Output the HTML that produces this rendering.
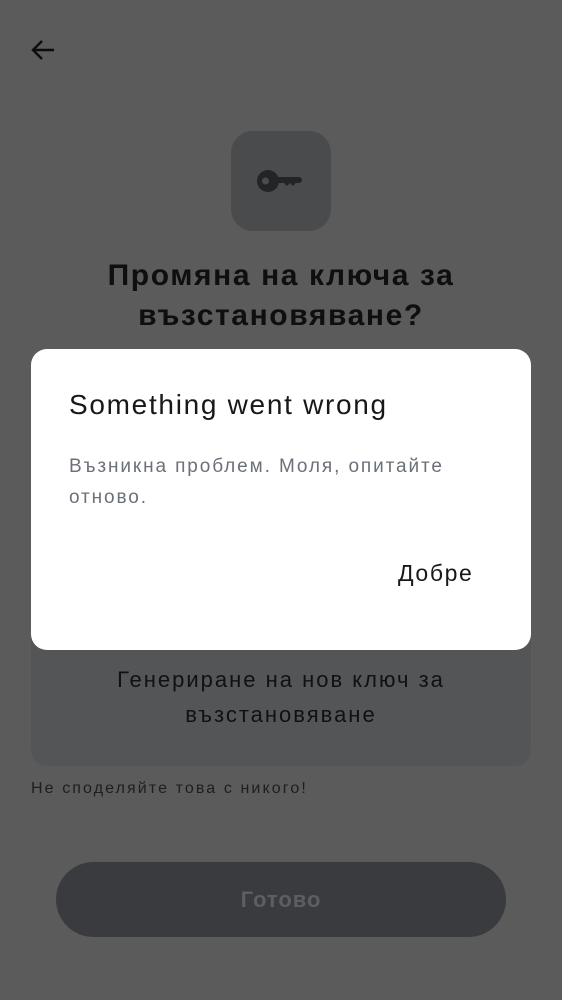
<!DOCTYPE html>
<html><head><meta charset="utf-8"><style>
*{margin:0;padding:0;box-sizing:border-box}
body{width:562px;height:1000px;background:#5b5b5b;font-family:"Liberation Sans",Roboto,sans-serif;position:relative;overflow:hidden}
.a{position:absolute}
</style></head><body>
<svg class="a" style="left:30px;top:38px" width="26" height="24" viewBox="0 0 26 24"><path d="M24 12H3M12 3L3 12l9 9" fill="none" stroke="#0c0c0c" stroke-width="2.4"/></svg>
<div class="a" style="left:231px;top:131px;width:100px;height:100px;border-radius:22px;background:#4a4b4d"></div>
<svg class="a" style="left:256px;top:166px" width="48" height="30" viewBox="0 0 48 30"><circle cx="12" cy="15" r="11" fill="#222427"/><circle cx="9.5" cy="15" r="3.5" fill="#4a4b4d"/><path d="M20 11h23a3 3 0 0 1 0 6h-3l-3 3-3-3-3 3-3-3h-8z" fill="#222427"/></svg>
<div class="a" style="left:0;width:562px;top:256px;text-align:center;font-size:30px;font-weight:bold;line-height:40px;color:#0f0f10;letter-spacing:1.6px">Промяна на ключа за<br>възстановяване?</div>
<div class="a" style="left:31px;top:590px;width:500px;height:176px;border-radius:16px;background:#545557"></div>
<div class="a" style="left:0;width:562px;top:662px;text-align:center;font-size:22px;line-height:35px;color:#111;letter-spacing:2px">Генериране на нов ключ за<br>възстановяване</div>
<div class="a" style="left:31px;top:780px;font-size:16px;color:#1d1e20;letter-spacing:2.1px">Не споделяйте това с никого!</div>
<div class="a" style="left:56px;top:862px;width:450px;height:75px;border-radius:38px;background:#3a3b3f;text-align:center;line-height:75px;font-size:22px;font-weight:bold;color:#5d5e61;letter-spacing:1px">Готово</div>
<div class="a" style="left:31px;top:349px;width:500px;height:301px;border-radius:16px;background:#fff">
<div class="a" style="left:38px;top:40px;font-size:28px;color:#17181a;letter-spacing:1.7px">Something went wrong</div>
<div class="a" style="left:38px;top:102px;font-size:19px;line-height:31px;color:#6b7079;letter-spacing:1.9px">Възникна проблем. Моля, опитайте<br>отново.</div>
<div class="a" style="left:367px;top:211px;font-size:23px;color:#17181a;letter-spacing:1.6px">Добре</div>
</div>
</body></html>
